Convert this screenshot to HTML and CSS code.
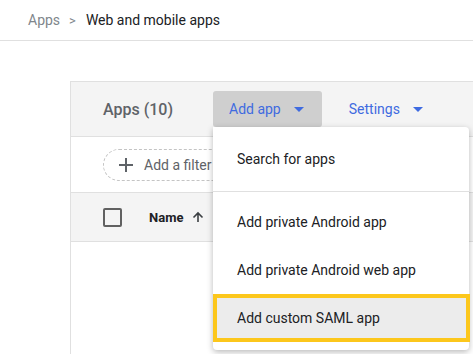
FILE: index.html
```html
<!doctype html>
<html lang="en">
  <head>
    <meta charset="UTF-8" />
    <meta name="viewport" content="width=device-width, initial-scale=1.0" />
    <link rel="stylesheet" href="styles.css">
    <title>Web and mobile apps</title>
  </head>
  <body>
    <!-- Breadcrumb bar -->
    <nav class="breadcrumb">
      <span class="crumb">Apps</span>
      <span class="crumb-sep">&gt;</span>
      <span class="crumb-current">Web and mobile apps</span>
    </nav>

    <main class="page">
      <section class="card">
        <!-- Card toolbar -->
        <div class="card-header">
          <h2 class="card-title">Apps (10)</h2>
          <div class="menu-anchor">
            <button class="tool-button is-open">
              Add app
              <span class="caret"></span>
            </button>
            <!-- Open dropdown -->
            <ul class="menu">
              <li class="menu-item">Search for apps</li>
              <li class="menu-divider"></li>
              <li class="menu-item">Add private Android app</li>
              <li class="menu-item">Add private Android web app</li>
              <li class="menu-item is-highlighted">Add custom SAML app</li>
            </ul>
          </div>
          <button class="tool-button">
            Settings
            <span class="caret"></span>
          </button>
        </div>

        <!-- Filter row -->
        <div class="filter-row">
          <div class="filter-chip">
            <svg class="plus" width="14" height="14" viewBox="0 0 14 14">
              <path d="M7 0v14M0 7h14" stroke="#5f6368" stroke-width="2" />
            </svg>
            Add a filter
          </div>
        </div>

        <!-- Table head -->
        <div class="table-head">
          <span class="checkbox"></span>
          <span class="col-name">Name</span>
          <svg class="sort-arrow" width="12" height="12" viewBox="0 0 12 12">
            <path d="M6 11V2M1.5 6.5L6 2l4.5 4.5" fill="none" stroke="#3c4043" stroke-width="1.6" />
          </svg>
        </div>
      </section>
    </main>
  </body>
</html>
```

FILE: styles.css
```css
html,
body {
  margin: 0;
  height: 100%;
  overflow: hidden;
  background: #fff;
  font-family: Roboto, "Liberation Sans", sans-serif;
}

.breadcrumb {
  display: flex;
  align-items: center;
  height: 40px;
  padding-left: 28px;
  border-bottom: 1px solid #e0e0e0;
  font-size: 14px;
}

.crumb {
  color: #80868b;
}

.crumb-sep {
  margin: 0 10px 0 9px;
  color: #80868b;
  font-size: 13px;
}

.crumb-current {
  color: #202124;
}

.page {
  padding: 40px 0 0 70px;
}

.card {
  min-height: 273px;
  border-left: 1px solid #e0e0e0;
  border-top: 1px solid #e0e0e0;
}

.card-header {
  display: flex;
  align-items: center;
  height: 54px;
  padding-left: 32px;
  background: #f4f4f4;
  border-bottom: 1px solid #e0e0e0;
}

.card-title {
  width: 110px;
  margin: 0;
  font-size: 16px;
  font-weight: 500;
  color: #5f6368;
}

.menu-anchor {
  position: relative;
  margin-right: 11px;
}

.tool-button {
  display: flex;
  align-items: center;
  gap: 13px;
  height: 36px;
  padding: 0 18px 0 16px;
  border: none;
  border-radius: 3px;
  background: transparent;
  font-family: inherit;
  font-size: 14px;
  color: #3f6be0;
}

.tool-button.is-open {
  background: #cfcfcf;
}

.caret {
  width: 0;
  height: 0;
  border-left: 5px solid transparent;
  border-right: 5px solid transparent;
  border-top: 5px solid #3f6be0;
}

.menu {
  position: absolute;
  top: 100%;
  left: 0;
  z-index: 2;
  width: 256px;
  margin: 0;
  padding: 8px 0;
  list-style: none;
  background: #fff;
  border-radius: 0 4px 4px 4px;
  box-shadow: 0 2px 6px rgba(0, 0, 0, 0.28);
}

.menu-item {
  display: flex;
  align-items: center;
  height: 48px;
  padding-left: 24px;
  font-size: 14px;
  color: #202124;
}

.menu-divider {
  height: 1px;
  margin: 8px 0 6px;
  background: #e0e0e0;
}

.menu-item.is-highlighted {
  box-sizing: border-box;
  margin-right: -1px;
  padding-left: 20px;
  border: 4px solid #fcc71c;
  background: #ececec;
}

.filter-row {
  display: flex;
  align-items: center;
  height: 55px;
  padding-left: 32px;
  border-bottom: 1px solid #e0e0e0;
}

.filter-chip {
  display: flex;
  align-items: center;
  gap: 11px;
  height: 30px;
  width: 130px;
  padding-left: 15px;
  border: 1px dashed #c4c4c4;
  border-radius: 16px;
  font-size: 14px;
  color: #5f6368;
}

.table-head {
  display: flex;
  align-items: center;
  height: 48px;
  padding-left: 32px;
  background: #f4f4f4;
  border-bottom: 1px solid #e0e0e0;
}

.checkbox {
  box-sizing: border-box;
  width: 19px;
  height: 19px;
  border: 2px solid #616161;
  border-radius: 2px;
  margin-right: 27px;
}

.col-name {
  font-size: 13px;
  font-weight: 700;
  color: #202124;
  margin-right: 9px;
}
```
